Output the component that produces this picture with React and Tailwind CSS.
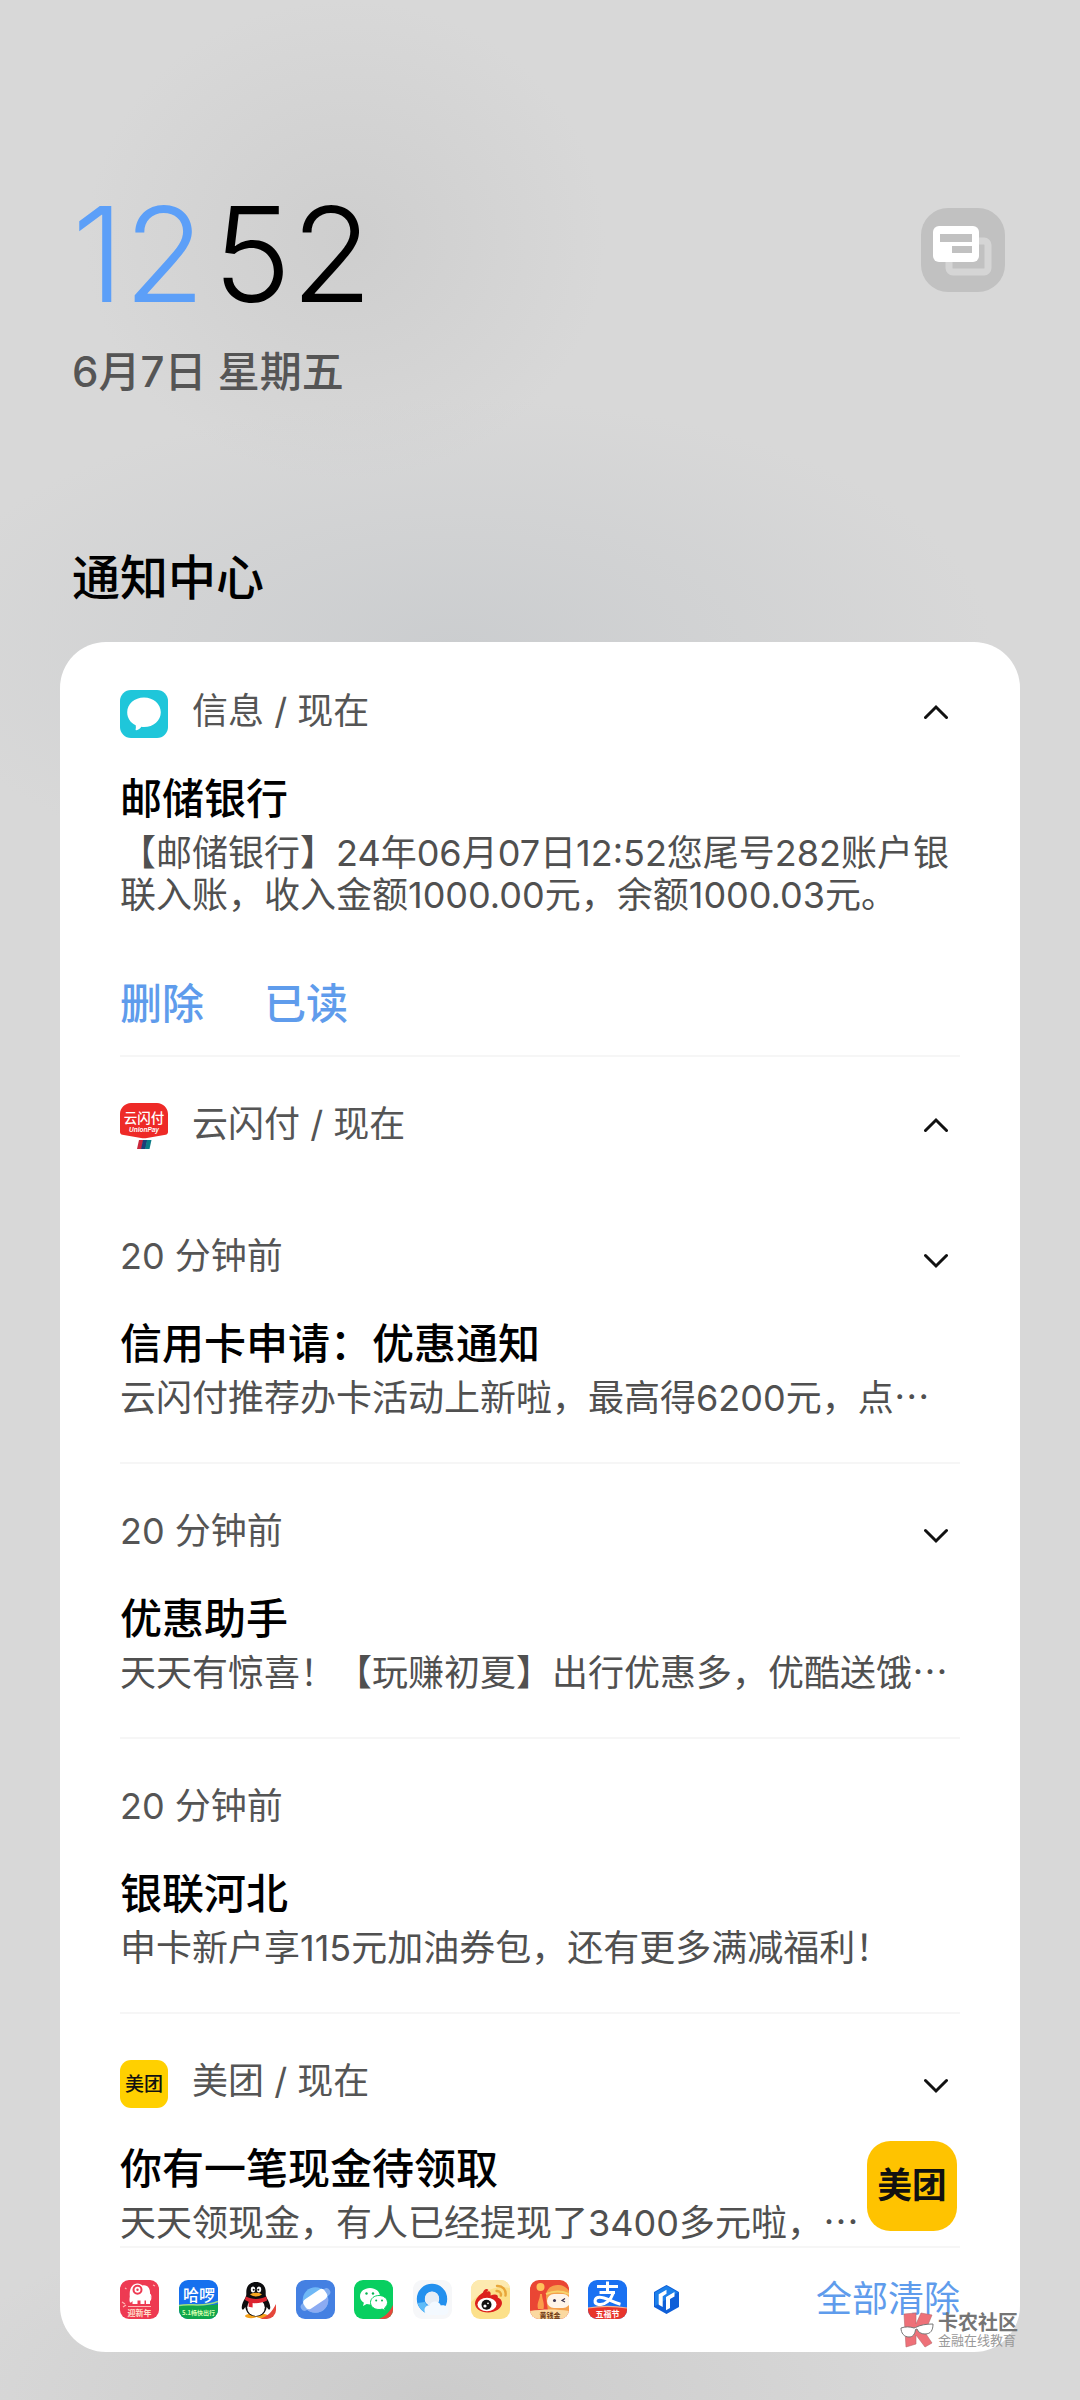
import React from "react";

const ELLIPSIS = "…";

function Chevron({ up = false }) {
  return (
    <svg viewBox="0 0 24 16" className="h-4 w-6" fill="none" stroke="#111" strokeWidth="3" strokeLinecap="round" strokeLinejoin="miter">
      <path d={up ? "M1.5 13.5 12 3 22.500 13.500" : "M1.5 2.500 12 13 22.500 2.500"} />
    </svg>
  );
}

function Toggle({ up, label }) {
  return (
    <button
      type="button"
      aria-label={label}
      aria-expanded={Boolean(up)}
      className={up ? "flex h-11 w-12 items-center justify-center" : "flex h-[52px] w-12 items-center justify-center"}
    >
      <Chevron up={up} />
    </button>
  );
}

function MessageIcon() {
  return (
    <svg viewBox="0 0 48 48" className="size-12 shrink-0">
      <rect width="48" height="48" rx="11" fill="#1fc6da" />
      <path d="M24 7.500c9.600 0 16.800 6.500 16.800 14.700S33.600 37 24 37c-.9 0-1.800 0-2.600-.2-1.200 1.700-3 2.900-5 3.500-.6.2-1-.2-.8-.8.4-1.300.4-2.700.1-4.200C10.600 32.800 7.200 28 7.200 22.200 7.200 14 14.400 7.500 24 7.500Z" fill="#fff" />
    </svg>
  );
}

function UnionPayIcon() {
  return (
    <svg viewBox="0 0 48 48" className="size-12 shrink-0">
      <path d="M11 0h26c6 0 11 5 11 11v18c0 1.500-1 2.400-2.400 2.800L27 35c-2 .4-4 .4-6 0L2.400 31.800C1 31.400 0 30.500 0 29V11C0 5 5 0 11 0Z" fill="#ee2a27" />
      <text x="24" y="20" textAnchor="middle" fontSize="13.500" fontWeight="500" fill="#fff" fontFamily="'Noto Sans CJK SC', sans-serif">云闪付</text>
      <text x="24" y="28.500" textAnchor="middle" fontSize="6.500" fontStyle="italic" fontWeight="700" fill="#fff" fontFamily="'Liberation Sans', sans-serif">UnionPay</text>
      <path d="M19 37h4.500L21.500 46H17Z" fill="#c8273c" />
      <path d="M23 37h4.500L25.500 46H21Z" fill="#1d3f78" />
      <path d="M27 37h4.500L29.500 46H25Z" fill="#0c7c86" />
    </svg>
  );
}

function MeituanIcon({ large = false }) {
  return (
    <svg viewBox="0 0 48 48" className={large ? "size-[90px] shrink-0" : "size-12 shrink-0"}>
      <rect width="48" height="48" rx={large ? 12.500 : 11} fill={large ? "#ffc300" : "#ffd000"} />
      <text x="24" y={large ? 30.500 : 31} textAnchor="middle" fontSize={large ? 18.500 : 19} fontWeight={large ? 700 : 500} fill="#111" fontFamily="'Noto Sans CJK SC', sans-serif">美团</text>
    </svg>
  );
}

function AppIcon({ label, children }) {
  return (
    <li>
      <svg role="img" aria-label={label} viewBox="0 0 39 39" className="size-[39px]">
        <defs>
          <clipPath id={"tile-" + label}>
            <rect width="39" height="39" rx="9" />
          </clipPath>
        </defs>
        <g clipPath={"url(#tile-" + label + ")"}>{children}</g>
      </svg>
    </li>
  );
}

const CJK = "'Noto Sans CJK SC', sans-serif";

function AppTray() {
  return (
    <ul className="flex w-[566px] items-center justify-between">
      <AppIcon label="elephant">
        <rect width="39" height="39" fill="#ee3a52" />
        <path d="M10 22.500c-1-2-.4-4.300-.2-6C9 9 12 3.800 17 3.500c2.500-.2 4 1 5.500 2C27 4.500 30 8 30 12v12h-4v-3.500h-1.500V24h-4v-3.500h-3V24h-5v-3c-.8.600-1.300 2-2.500 1.500Z" fill="#fff" />
        <circle cx="17.500" cy="9.800" r="4" fill="none" stroke="#ee3a52" strokeWidth="2" />
        <circle cx="17.500" cy="9.800" r="1.200" fill="#ee3a52" />
        <path d="M30 14c2 3 .5 7-2 8.500" fill="none" stroke="#fff" strokeWidth="1.300" />
        <path d="M8 26.500h23M2 22l3 2M33 5l2 1M5 8l1.500 1M3 27l3-2" stroke="#ffb7b2" strokeWidth="1.200" />
        <text x="19.500" y="35.800" textAnchor="middle" fontSize="8" fontWeight="700" fill="#ffe3cf" fontFamily={CJK}>迎新年</text>
      </AppIcon>
      <AppIcon label="hello">
        <rect width="39" height="39" fill="#1670ee" />
        <path d="M0 25.500c12-2.500 22 1.800 39-1.500V39H0Z" fill="#0fa64b" />
        <path d="M0 25.500c12-2.500 24 2.500 39-4" fill="none" stroke="#9fe07e" strokeWidth="1.500" />
        <text x="20" y="20.500" textAnchor="middle" fontSize="16" fontWeight="500" fill="#fff" fontFamily={CJK}>哈啰</text>
        <text x="19.500" y="35" textAnchor="middle" fontSize="6" fontWeight="700" fill="#d6ffb0" fontFamily={CJK}>5.1畅快出行</text>
      </AppIcon>
      <AppIcon label="qq">
        <ellipse cx="14" cy="36" rx="6" ry="2.200" fill="#f6a21c" />
        <ellipse cx="25" cy="36" rx="6" ry="2.200" fill="#f6a21c" />
        <path d="M19 2c-6.300 0-9.700 4.300-9.700 10 0 2 .2 3.500-.8 5.500C6 21.500 4 26 5 29c.6 1.200 2 .4 3.300-2C9.300 33 13 36.500 19 36.500S28.700 33 29.700 27c1.500 2.400 2.700 3.200 3.300 2 1-3-1-7.500-3.500-11.500-1-2-.8-3.500-.8-5.500 0-5.700-3.400-10-9.700-10Z" fill="#0d0d0f" />
        <ellipse cx="19" cy="27.500" rx="8.800" ry="8.500" fill="#fff" />
        <ellipse cx="16" cy="9.500" rx="2.200" ry="3" fill="#fff" />
        <ellipse cx="22" cy="9.500" rx="2.200" ry="3" fill="#fff" />
        <circle cx="16.700" cy="9.800" r="1" fill="#111" />
        <circle cx="21.300" cy="9.800" r="1" fill="#111" />
        <path d="M13 14.200c4-1.800 8-1.800 12 0-3.500 3-8.500 3-12 0Z" fill="#f7a823" />
        <path d="M8.800 16.500c6.500 3.300 14 3.300 20.500 0l.8 4c-5 2.500-10 3-14.500 2.500v4.500l-4-.8v-5l-3.600-1.700Z" fill="#dc2430" />
        <path d="M39 24v8c0 4-3 7-7 7h-9C31 36 35 32 39 24Z" fill="#e5473b" />
      </AppIcon>
      <AppIcon label="browser">
        <rect width="39" height="39" fill="#4480e2" />
        <circle cx="19.500" cy="20" r="12.800" fill="#6fb8f6" />
        <path d="M32 17c1.500 9-4.500 15.800-12.500 15.800-4 0-7-1.300-9.500-4.300Z" fill="#8cabf2" />
        <g transform="rotate(-34 19.500 19.500)">
          <rect x="2.500" y="15.500" width="34" height="8" rx="4" fill="#b8d4fb" opacity=".55" />
          <rect x="7" y="13.500" width="25" height="11" rx="4" fill="#fff" />
        </g>
      </AppIcon>
      <AppIcon label="wechat">
        <rect width="39" height="39" fill="#08cf60" />
        <path d="M16 8c5.600 0 10 3.600 10 8.200S21.600 24.400 16 24.400c-1.200 0-2.300-.2-3.300-.4L9 26l.9-3.200C7.500 21.300 6 19 6 16.200 6 11.600 10.400 8 16 8Z" fill="#fff" />
        <path d="M25 15.500c4.800 0 8.500 3 8.500 7 0 2.300-1.200 4.200-3 5.500l.7 2.600-3-1.500c-1 .3-2 .4-3.200.4-4.800 0-8.500-3-8.500-7s3.700-7 8.500-7Z" fill="#fff" stroke="#08cf60" strokeWidth="1" />
        <g fill="#08b555">
          <circle cx="12.500" cy="13.500" r="1.200" />
          <circle cx="19" cy="13.500" r="1.200" />
          <circle cx="22.200" cy="20.500" r="1" />
          <circle cx="28" cy="20.500" r="1" />
        </g>
        <path d="M39 25v14H25C32 36 36 31.500 39 25Z" fill="#e5473b" />
      </AppIcon>
      <AppIcon label="qq-browser">
        <rect width="39" height="39" fill="#f6f7f9" />
        <circle cx="19" cy="19" r="11.200" fill="none" stroke="#2390ee" strokeWidth="8" />
        <path d="M4.500 23c1.500 5 5 9.500 11 10.700L17 27c-2-1-4-2-5-5Z" fill="#5fbcf8" />
        <circle cx="19" cy="18.500" r="7" fill="#e7edf5" />
        <path d="M17 35c-4 0-5.500-2.500-5.500-5s2-5 5-4.800C17.500 22.500 20 21 23 21.500c2.500.5 4 2 4.800 4C32 24.500 35.500 27 35.500 30.500S32.500 35 29.500 35Z" fill="#f3f9ff" />
      </AppIcon>
      <AppIcon label="weibo">
        <rect width="39" height="39" fill="#fce08a" />
        <path d="M0 0h39v8C24 5 10 12 0 22Z" fill="#fdeab0" />
        <path d="M15.500 12c2.800-2 5 .2 4 3.500 4-1.800 8-1.500 7.300 2 2.500 1 4.200 2.800 4.200 5.500 0 5-6.500 9.500-14 9.500S4 28.500 4 23.500 9.500 14 12 12.500c.8-3.500 4-4.500 5.500-2.500Z" fill="#dc1f1c" />
        <ellipse cx="16" cy="24.500" rx="9.500" ry="6.700" fill="#fff" />
        <circle cx="15.500" cy="24.700" r="5" fill="#111" />
        <circle cx="14" cy="26" r="1.600" fill="#fff" />
        <circle cx="17" cy="23.300" r=".9" fill="#fff" />
        <g fill="none" stroke="#e8a63a" strokeWidth="2.400" strokeLinecap="round">
          <path d="M26 6c5.500-.5 9.500 4 8.500 9.500" />
          <path d="M25.500 11c3-.3 5 2 4.300 4.600" />
        </g>
      </AppIcon>
      <AppIcon label="monkey">
        <rect width="39" height="39" fill="#ea4634" />
        <path d="M16 17c0-9 6-12.500 13-12 5 .4 8 3 10 6v20H18Z" fill="#f5a04c" />
        <circle cx="10.500" cy="7" r="4" fill="#ffc35c" />
        <path d="M8 29c-1.500-7 2-9 2-15h2c0 6 3 9 1.500 15Z" fill="#fb9d4b" />
        <path d="M16 14c7-3 16-3 23 0" stroke="#f7d36c" strokeWidth="2" fill="none" />
        <rect x="17" y="14" width="23" height="14" rx="7" fill="#fff4e8" />
        <circle cx="24.500" cy="20.500" r="1.500" fill="#3b3550" />
        <path d="m35 18.500-3 2 3 1.500" fill="none" stroke="#3b3550" strokeWidth="1.200" />
        <path d="M0 31c12-2 27-2 39 0v8H0Z" fill="#fbd9a1" />
        <text x="20" y="37.600" textAnchor="middle" fontSize="7" fontWeight="700" fill="#6f3a13" fontFamily={CJK}>黄钱金</text>
      </AppIcon>
      <AppIcon label="alipay">
        <rect width="39" height="39" fill="#1a71f2" />
        <path d="M9 6.500h21M19.500 1.500v11M11.500 12.500h15.500" stroke="#fff" strokeWidth="3" fill="none" />
        <path d="M25.500 12.500C23 20 17 25.500 10.500 24.500c-5-1-4.500-7 1-7.200 6-.2 12 4.700 21 7" stroke="#fff" strokeWidth="3" fill="none" />
        <path d="M0 28c12-2 27-2 39 0v11H0Z" fill="#e8352c" />
        <path d="M0 28c12-2 27-2 39 0" fill="none" stroke="#f7b190" strokeWidth="1.200" />
        <text x="19.500" y="37" textAnchor="middle" fontSize="8" fontWeight="700" fill="#fff" fontFamily={CJK}>五福节</text>
      </AppIcon>
      <AppIcon label="cube">
        <path d="m19.500 6 11.500 6.500v14L19.500 33 8 26.500v-14Z" fill="#0f5fd8" stroke="#0f5fd8" strokeWidth="2" strokeLinejoin="round" />
        <path d="m19.500 6 11.500 6.500-11.500 6.700L8 26V12.500Z" fill="#1c80ea" />
        <path d="m11.700 14.300 7.800-4.500v4l-3.800 2.400V27l-4-2.300Z" fill="#fff" />
        <path d="m19 17 8.500-5v4.500L23 19v9l-4 2.300Z" fill="#fff" />
      </AppIcon>
    </ul>
  );
}

function SourceRow({ icon, name, up }) {
  return (
    <header className="flex h-12 items-start justify-between">
      <div className="flex items-start gap-6">
        {icon}
        <p className="text-4xl leading-[42px] text-[#555]">{name} / 现在</p>
      </div>
      <Toggle up={up} label={name} />
    </header>
  );
}

function Item({ time, title, body, toggle }) {
  return (
    <article className="border-b-2 border-[#f6f6f6] pt-[43px] pb-[43px]">
      <div className="flex h-12 items-center justify-between">
        <p className="text-4xl leading-[48px] text-[#555]">{time}</p>
        {toggle && <div className="pt-2.5"><Toggle label={title} /></div>}
      </div>
      <h3 className="mt-10 text-[42px] leading-[48px] font-medium text-black">{title}</h3>
      <p className="mt-[9px] h-[42px] text-4xl leading-[42px] whitespace-nowrap text-[#505050]">{body}</p>
    </article>
  );
}

function Dots() {
  return <span className="font-['Noto_Sans_CJK_SC'] leading-none">{ELLIPSIS}</span>;
}

export default function App() {
  return (
    <main
      lang="zh-CN"
      className="min-h-screen bg-[#d8d8d8] bg-[radial-gradient(ellipse_540px_250px_at_42%_27%,#cbcdcf_0%,transparent_100%),radial-gradient(ellipse_260px_240px_at_32%_10%,#cecece_0%,transparent_100%),radial-gradient(ellipse_500px_200px_at_40%_100%,#cbcbcb_0%,transparent_100%)] px-[60px] pt-[186px] pb-12 font-['Inter','Noto_Sans_CJK_SC',sans-serif]"
    >
      <header className="flex items-start justify-between px-3">
        <div>
          <p className="flex gap-2 text-[132px] leading-[136px] font-light">
            <span className="text-[#5c9ff8]">12</span>
            <span className="text-black">52</span>
          </p>
          <p className="mt-[26px] text-[42px] leading-[48px] font-medium text-[#555]">6月7日 星期五</p>
        </div>
        <button type="button" aria-label="通知管理" className="mt-[22px] mr-[3px] size-[84px]">
          <svg viewBox="0 0 84 84" className="size-full">
            <rect width="84" height="84" rx="27" fill="#c1c1c1" />
            <rect x="28" y="33" width="39" height="31" rx="4" fill="none" stroke="#d5d5d5" strokeWidth="7" />
            <rect x="12" y="18" width="46" height="36" rx="6" fill="#fff" />
            <path d="M19 26h32v8H19ZM31 38h20v7H31Z" fill="#c1c1c1" />
          </svg>
        </button>
      </header>

      <h1 className="mt-[154px] px-3 text-5xl leading-[56px] font-medium text-black">通知中心</h1>

      <section className="relative mt-9 rounded-[46px] bg-white px-[60px] pt-12">
        <SourceRow icon={<MessageIcon />} name="信息" up />
        <h2 className="mt-[37px] text-[42px] leading-[48px] font-medium text-black">邮储银行</h2>
        <p className="mt-[9px] text-4xl leading-[42px] text-[#505050]">
          【邮储银行】24年06月07日12:52您尾号282账户银联入账，收入金额1000.00元，余额1000.03元。
        </p>
        <div className="mt-16 flex gap-15 border-b-2 border-[#f6f6f6] pb-[27px] text-[42px] leading-[48px] font-medium text-[#5f9cec]">
          <button type="button">删除</button>
          <button type="button">已读</button>
        </div>

        <div className="pt-[46px] pb-[38px]">
          <SourceRow icon={<UnionPayIcon />} name="云闪付" up />
        </div>
        <Item time="20 分钟前" title="信用卡申请：优惠通知" body={<>云闪付推荐办卡活动上新啦，最高得6200元，点<Dots /></>} toggle />
        <Item time="20 分钟前" title="优惠助手" body={<>天天有惊喜！【玩赚初夏】出行优惠多，优酷送饿<Dots /></>} toggle />
        <Item time="20 分钟前" title="银联河北" body="申卡新户享115元加油券包，还有更多满减福利！" />

        <div className="border-b-2 border-[#f6f6f6] pt-[46px]">
          <SourceRow icon={<MeituanIcon />} name="美团" />
          <div className="flex items-start justify-between pt-[33px] pr-[3px]">
            <div className="pt-1">
              <h2 className="text-[42px] leading-[48px] font-medium text-black">你有一笔现金待领取</h2>
              <p className="mt-[9px] h-11 text-4xl leading-[42px] whitespace-nowrap text-[#505050]">天天领现金，有人已经提现了3400多元啦，<Dots /></p>
            </div>
            <MeituanIcon large />
          </div>
        </div>

        <footer className="flex h-[104px] items-center justify-between pb-0.5">
          <AppTray />
          <button type="button" className="text-4xl leading-[42px] text-[#5f9cec]">全部清除</button>
        </footer>

        <div className="absolute right-[2px] bottom-1 flex items-center gap-1">
          <svg viewBox="0 0 34 36" className="h-9 w-[34px]">
            <path d="M4 2 16 1v11l5-11 11 2-5 12-3 4 8 12-7 4-9-12v9L6 35Z" fill="#ee7078" stroke="#b9686c" strokeWidth=".6" />
            <path d="M1 16c4-1.500 9-1.500 13 0l1.500-.5C20 13 26 12 33 12c0 6-2 10-8 10-4 0-7-2-8-5l-1.500.5C15 22 13 25 9 25c-5 0-8-4-8-9Z" fill="#fff" stroke="#777" strokeWidth="1" />
          </svg>
          <p className="flex flex-col">
            <span className="text-xl leading-5 font-bold text-[#757575]">卡农社区</span>
            <span className="text-[13px] leading-[14px] text-[#999]">金融在线教育</span>
          </p>
        </div>
      </section>
    </main>
  );
}
